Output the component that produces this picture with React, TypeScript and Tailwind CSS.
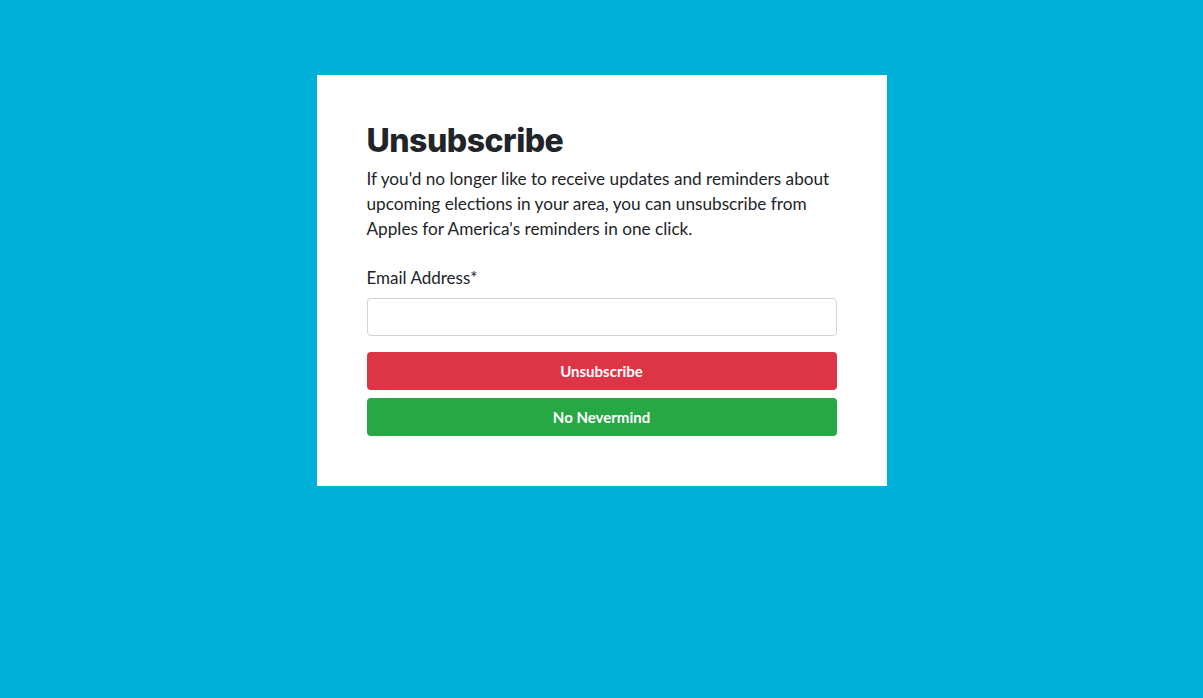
export default function App() {
  return (
    <div className="min-h-[698px] w-full bg-[#00b0d8] pt-[75px] font-['Lato','Open_Sans',sans-serif]">
      <div className="mx-auto w-[570px] bg-white px-[50px] pt-[47px] pb-[50px]">
        <h1 className="font-['Inter',sans-serif] text-[32px] leading-[38px] font-extrabold tracking-[-0.5px] text-[#212529]">
          Unsubscribe
        </h1>
        <p className="mt-[6px] text-[17.2px] leading-[25px] text-[#212529]">
          If you'd no longer like to receive updates and reminders about upcoming elections in your area, you can
          unsubscribe from Apples for America's reminders in one click.
        </p>
        <form className="mt-[25px]" onSubmit={(e) => e.preventDefault()}>
          <label className="block text-[17px] leading-[24px] text-[#212529]">Email Address*</label>
          <input
            type="email"
            className="mt-[8px] block h-[38px] w-full rounded-[4px] border border-[#ced4da] bg-white px-3"
          />
          <button
            type="submit"
            className="mt-[16px] flex h-[38px] w-full items-center justify-center rounded-[4px] bg-[#dc3545] text-[15px] font-bold text-white"
          >
            Unsubscribe
          </button>
          <button
            type="button"
            className="mt-[8px] flex h-[38px] w-full items-center justify-center rounded-[4px] bg-[#28a745] text-[15px] font-bold text-white"
          >
            No Nevermind
          </button>
        </form>
      </div>
    </div>
  );
}
